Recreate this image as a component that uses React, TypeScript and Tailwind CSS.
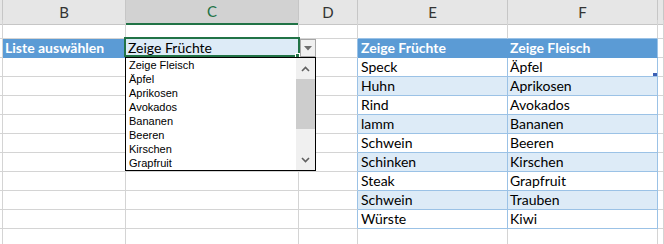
import React from 'react';

const cols = 'grid grid-cols-[3px_123px_173px_59px_150px_150px_1fr]';

const table: [string, string][] = [
  ['Speck', 'Äpfel'],
  ['Huhn', 'Aprikosen'],
  ['Rind', 'Avokados'],
  ['lamm', 'Bananen'],
  ['Schwein', 'Beeren'],
  ['Schinken', 'Kirschen'],
  ['Steak', 'Grapfruit'],
  ['Schwein', 'Trauben'],
  ['Würste', 'Kiwi'],
];

const listItems = [
  'Zeige Fleisch',
  'Äpfel',
  'Aprikosen',
  'Avokados',
  'Bananen',
  'Beeren',
  'Kirschen',
  'Grapfruit',
];

const Cell: React.FC<{ className?: string; children?: React.ReactNode }> = ({
  className = '',
  children,
}) => (
  <div
    className={`flex items-end overflow-visible whitespace-nowrap border-r border-b pl-[2px] pb-[1px] leading-[17px] ${className}`}
  >
    {children}
  </div>
);

const HeaderCell: React.FC<{ label?: string; active?: boolean }> = ({ label, active }) => (
  <div
    className={`flex items-center justify-center border-r border-[#c6c6c6] text-[15px] ${
      active
        ? 'bg-[#d2d2d2] text-[#217346] border-b-2 border-b-[#217346]'
        : 'bg-[#e6e6e6] text-[#333] border-b border-b-[#c6c6c6]'
    }`}
  >
    {label}
  </div>
);

export default function App() {
  return (
    <div
      className="relative w-[664px] h-[244px] overflow-hidden bg-white text-[14px] text-black"
      style={{ fontFamily: 'Lato, "Liberation Sans", sans-serif' }}
    >
      {/* Column headers */}
      <div className={`${cols} h-[20px]`}>
        <HeaderCell />
        <HeaderCell label="B" />
        <HeaderCell label="C" active />
        <HeaderCell label="D" />
        <HeaderCell label="E" />
        <HeaderCell label="F" />
        <HeaderCell />
      </div>

      {/* Row 1 */}
      <div className={`${cols} h-[19px]`}>
        <Cell className="border-[#d4d4d4]" />
        <Cell className="border-[#d4d4d4]" />
        <Cell className="border-[#d4d4d4]" />
        <Cell className="border-[#d4d4d4]" />
        <Cell className="border-r-[#d4d4d4] border-b-[#9bc2e6]" />
        <Cell className="border-r-[#d4d4d4] border-b-[#9bc2e6]" />
        <Cell className="border-[#d4d4d4]" />
      </div>

      {/* Row 2 */}
      <div className={`${cols} h-[19px]`}>
        <Cell className="border-[#d4d4d4]" />
        <Cell className="border-[#5b9bd5] bg-[#5b9bd5] font-bold text-white">Liste auswählen</Cell>
        <Cell className="border-[#d4d4d4] bg-[#ddebf7] pl-[1px]">Zeige Früchte</Cell>
        <Cell className="border-b-[#d4d4d4] border-r-[#9bc2e6]" />
        <Cell className="border-[#5b9bd5] bg-[#5b9bd5] font-bold text-white pl-[3px]">Zeige Früchte</Cell>
        <Cell className="border-b-[#5b9bd5] border-r-[#9bc2e6] bg-[#5b9bd5] font-bold text-white">Zeige Fleisch</Cell>
        <Cell className="border-[#d4d4d4]" />
      </div>

      {/* Table rows */}
      {table.map(([a, b], i) => {
        const bg = i % 2 === 1 ? 'bg-[#ddebf7]' : 'bg-white';
        return (
          <div key={i} className={`${cols} h-[19px]`}>
            <Cell className="border-[#d4d4d4]" />
            <Cell className="border-[#d4d4d4]" />
            <Cell className="border-[#d4d4d4]" />
            <Cell className="border-b-[#d4d4d4] border-r-[#9bc2e6]" />
            <Cell className={`border-[#9bc2e6] pl-[3px] ${bg}`}>{a}</Cell>
            <Cell className={`border-[#9bc2e6] ${bg}`}>{b}</Cell>
            <Cell className="border-[#d4d4d4]" />
          </div>
        );
      })}

      {/* Empty row */}
      <div className={`${cols} h-[19px]`}>
        <Cell className="border-[#d4d4d4]" />
        <Cell className="border-[#d4d4d4]" />
        <Cell className="border-[#d4d4d4]" />
        <Cell className="border-[#d4d4d4]" />
        <Cell className="border-[#d4d4d4]" />
        <Cell className="border-[#d4d4d4]" />
        <Cell className="border-[#d4d4d4]" />
      </div>

      {/* Selected cell outline + fill handle */}
      <div className="absolute left-[124px] top-[37px] w-[176px] h-[20px] border-2 border-[#217346] pointer-events-none" />
      <div className="absolute left-[295px] top-[53px] w-[5px] h-[5px] bg-[#217346] border border-white" />

      {/* Table resize handle */}
      <div className="absolute left-[653px] top-[73px] w-[4px] h-[3px] bg-[#3c5fb4]" />

      {/* Dropdown button */}
      <div className="absolute left-[300px] top-[39px] w-[16px] h-[18px] flex items-center justify-center bg-[#f0f0f0] border border-[#a6a6a6]">
        <svg width="8" height="5" viewBox="0 0 8 5">
          <path d="M0 0 H8 L4 4.5 Z" fill="#6d6d6d" />
        </svg>
      </div>

      {/* Dropdown list */}
      <div
        className="absolute left-[125px] top-[57px] w-[191px] h-[114px] flex bg-white border border-black text-[11px] leading-[14px]"
        style={{ fontFamily: '"Liberation Sans", Arial, sans-serif' }}
      >
        <div className="flex-1 flex flex-col pl-[3px]">
          {listItems.map((t) => (
            <div key={t} className="h-[14px] whitespace-nowrap text-black">
              {t}
            </div>
          ))}
        </div>
        <div className="w-[19px] flex flex-col bg-[#f0f0f0]">
          <div className="h-[21px] flex items-center justify-center">
            <svg width="9" height="6" viewBox="0 0 9 6">
              <path d="M1 5 L4.5 1.5 L8 5" stroke="#606060" strokeWidth="1.6" fill="none" />
            </svg>
          </div>
          <div className="h-[50px] bg-[#cdcdcd]" />
          <div className="flex-1" />
          <div className="h-[21px] flex items-center justify-center">
            <svg width="9" height="6" viewBox="0 0 9 6">
              <path d="M1 1 L4.5 4.5 L8 1" stroke="#606060" strokeWidth="1.6" fill="none" />
            </svg>
          </div>
        </div>
      </div>
    </div>
  );
}
